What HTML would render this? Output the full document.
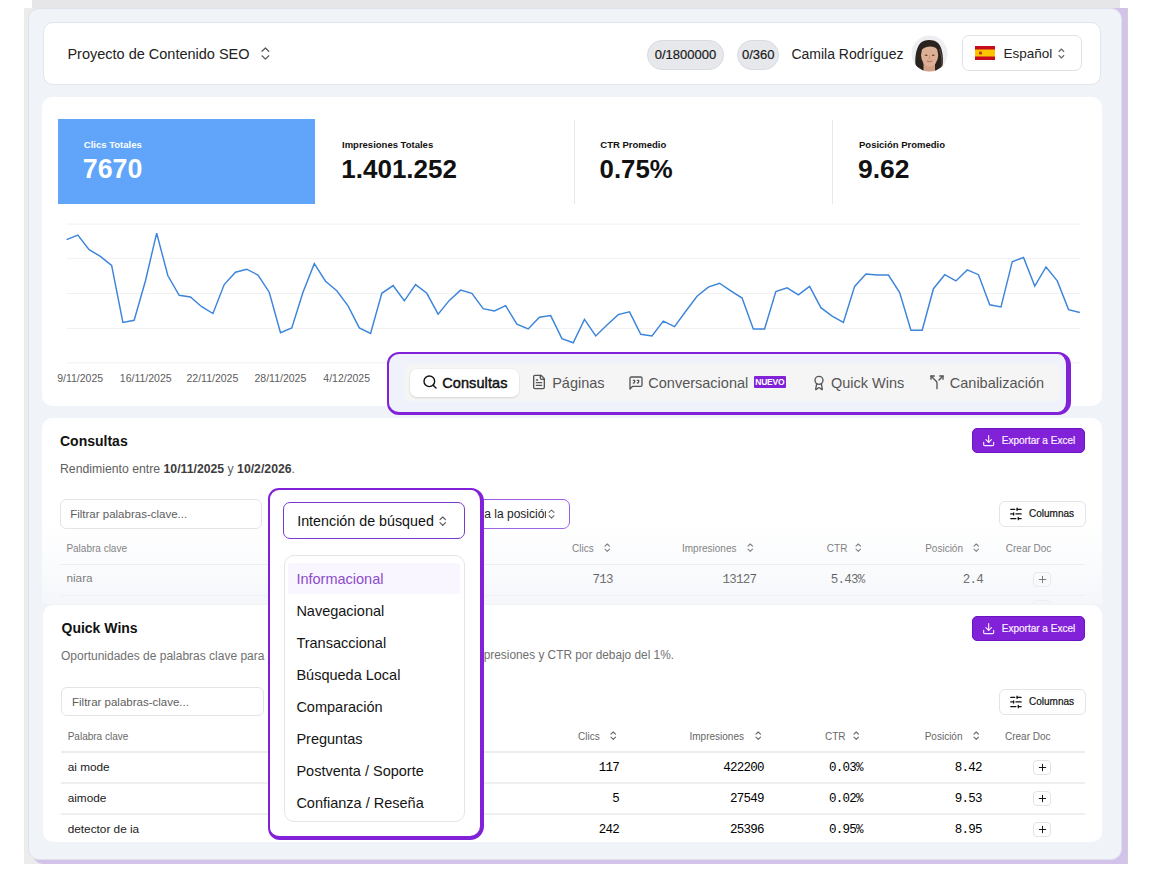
<!DOCTYPE html>
<html><head><meta charset="utf-8">
<style>
*{box-sizing:border-box;margin:0;padding:0}
html,body{width:1150px;height:873px;overflow:hidden;background:#fff;font-family:"Liberation Sans",sans-serif}
.r{position:absolute}
.t{position:absolute;white-space:nowrap}
b{font-weight:700}
</style></head><body>
<div class="r" style="left:32.00px;top:0.00px;width:1088.00px;height:8.00px;background:#e6e6e8"></div>
<div class="r" style="left:24.00px;top:8.00px;width:1104.00px;height:856.00px;background:linear-gradient(90deg,#ececec 0%,#e6e6e8 95%,#cfcfd3 100%)"></div>
<div class="r" style="left:32.00px;top:8.00px;width:1095.40px;height:856.00px;background:#d3c3eb;border-radius:11px 0 3px 12px"></div>
<div class="r" style="left:28.20px;top:8.00px;width:1093.80px;height:852.00px;background:#f0f3f8;border:1.6px solid #dfe2ec;border-radius:11px"></div>
<div class="r" style="left:43.00px;top:22.00px;width:1058.00px;height:62.50px;background:#fff;border:1.5px solid #e2e5eb;border-radius:10px"></div>
<div class="t" style="left:67.40px;top:46.73px;font-size:14.5px;line-height:14.5px;font-weight:400;color:#222;font-family:'Liberation Sans',sans-serif;">Proyecto de Contenido SEO</div>
<svg class="r" style="left:260.10px;top:46.40px;" width="10.8" height="15.1" viewBox="0 0 10.8 15.1" fill="none"><path d="M2.00 5.30 L5.40 2.00 L8.80 5.30 M2.00 9.80 L5.40 13.10 L8.80 9.80" stroke="#555" stroke-width="1.2" stroke-linecap="round" stroke-linejoin="round"/></svg>
<div class="r" style="left:647.00px;top:40.00px;width:77.00px;height:30.30px;background:#e6e8ec;border:1px solid #d8dbe1;border-radius:16px"></div>
<div class="t" style="left:685.50px;transform:translateX(-50%);top:48.20px;font-size:13px;line-height:13px;font-weight:400;color:#1a1a1a;font-family:'Liberation Sans',sans-serif;-webkit-text-stroke:0.2px #1a1a1a">0/1800000</div>
<div class="r" style="left:737.40px;top:40.00px;width:41.60px;height:30.30px;background:#e6e8ec;border:1px solid #d8dbe1;border-radius:16px"></div>
<div class="t" style="left:758.20px;transform:translateX(-50%);top:48.20px;font-size:13px;line-height:13px;font-weight:400;color:#1a1a1a;font-family:'Liberation Sans',sans-serif;-webkit-text-stroke:0.2px #1a1a1a">0/360</div>
<div class="t" style="left:791.40px;top:46.65px;font-size:14px;line-height:14px;font-weight:400;color:#222;font-family:'Liberation Sans',sans-serif;">Camila Rodríguez</div>
<svg class="r" style="left:910.50px;top:35.00px;" width="37" height="37" viewBox="0 0 37 37" fill="none"><circle cx="18.5" cy="18.5" r="18" fill="#eeeef2"/><clipPath id="avc"><circle cx="18.5" cy="18.5" r="18"/></clipPath><filter id="avb"><feGaussianBlur stdDeviation="0.45"/></filter><g clip-path="url(#avc)" filter="url(#avb)"><path d="M5.5 34 C3 27 4.5 13 9.5 8 C13.5 4 23.5 4 27.5 8.5 C32 13.5 33 26 31 34 L26 36 L11 36 Z" fill="#2a211f"/><path d="M28.5 14 C31 20 31.5 28 30.5 33" stroke="#6a5a55" stroke-width="0.8" fill="none"/><rect x="12.5" y="27" width="11.5" height="12" fill="#d2a085"/><ellipse cx="18.6" cy="20" rx="8.6" ry="11.6" fill="#ddb096"/><path d="M9.8 15.5 C10.2 9 14.5 7 18.8 7 C23.5 7 27 9.5 27.4 15.5 C24.5 10.5 15 10 9.8 15.5 Z" fill="#2a211f"/><ellipse cx="15.2" cy="20.2" rx="1.5" ry="0.8" fill="#6b4536"/><ellipse cx="22.2" cy="20.2" rx="1.5" ry="0.8" fill="#6b4536"/><path d="M18.6 20.5 L18 24 L19.3 24" stroke="#c48f74" stroke-width="0.7" fill="none"/><path d="M15.8 26 Q18.6 27.6 21.4 26" stroke="#b0705e" stroke-width="1" fill="none"/></g></svg>
<div class="r" style="left:962.40px;top:35.20px;width:120.00px;height:35.40px;background:#fff;border:1px solid #dfe2e7;border-radius:7px"></div>
<svg class="r" style="left:975.00px;top:46.00px;" width="20" height="14" viewBox="0 0 20 14" fill="none"><rect x="0" y="0" width="20" height="14" fill="#c60b1e"/><rect x="0" y="3.5" width="20" height="7" fill="#ffc400"/><rect x="4" y="5.5" width="3" height="3" rx="1" fill="#ad1519" opacity="0.8"/></svg>
<div class="t" style="left:1003.50px;top:46.57px;font-size:13.5px;line-height:13.5px;font-weight:400;color:#222;font-family:'Liberation Sans',sans-serif;">Español</div>
<svg class="r" style="left:1057.30px;top:46.50px;" width="8.8" height="13" viewBox="0 0 8.8 13" fill="none"><path d="M2.00 4.50 L4.40 2.00 L6.80 4.50 M2.00 8.50 L4.40 11.00 L6.80 8.50" stroke="#666" stroke-width="1.1" stroke-linecap="round" stroke-linejoin="round"/></svg>
<div class="r" style="left:42.00px;top:97.00px;width:1060.00px;height:309.00px;background:#fff;border-radius:10px"></div>
<div class="r" style="left:57.50px;top:119.00px;width:257.50px;height:85.00px;background:#60a5fa"></div>
<div class="t" style="left:83.80px;top:140.46px;font-size:9.5px;line-height:9.5px;font-weight:700;color:#fff;font-family:'Liberation Sans',sans-serif;">Clics Totales</div>
<div class="t" style="left:82.80px;top:155.81px;font-size:26.8px;line-height:26.8px;font-weight:700;color:#fff;font-family:'Liberation Sans',sans-serif;">7670</div>
<div class="t" style="left:342.00px;top:140.46px;font-size:9.5px;line-height:9.5px;font-weight:700;color:#111;font-family:'Liberation Sans',sans-serif;">Impresiones Totales</div>
<div class="t" style="left:341.30px;top:156.49px;font-size:26px;line-height:26px;font-weight:700;color:#111;font-family:'Liberation Sans',sans-serif;">1.401.252</div>
<div class="r" style="left:573.50px;top:120.00px;width:1.00px;height:84.00px;background:#e8e8ea"></div>
<div class="t" style="left:600.30px;top:140.46px;font-size:9.5px;line-height:9.5px;font-weight:700;color:#111;font-family:'Liberation Sans',sans-serif;">CTR Promedio</div>
<div class="t" style="left:599.60px;top:156.66px;font-size:25.8px;line-height:25.8px;font-weight:700;color:#111;font-family:'Liberation Sans',sans-serif;">0.75%</div>
<div class="r" style="left:831.50px;top:120.00px;width:1.00px;height:84.00px;background:#e8e8ea"></div>
<div class="t" style="left:859.00px;top:140.46px;font-size:9.5px;line-height:9.5px;font-weight:700;color:#111;font-family:'Liberation Sans',sans-serif;">Posición Promedio</div>
<div class="t" style="left:858.00px;top:156.07px;font-size:26.5px;line-height:26.5px;font-weight:700;color:#111;font-family:'Liberation Sans',sans-serif;">9.62</div>
<svg class="r" style="left:0.00px;top:0.00px;" width="1150" height="873" viewBox="0 0 1150 873" fill="none"><line x1="66.6" y1="224.1" x2="1080" y2="224.1" stroke="#f1f1f2" stroke-width="1"/><line x1="66.6" y1="258.6" x2="1080" y2="258.6" stroke="#f1f1f2" stroke-width="1"/><line x1="66.6" y1="293.5" x2="1080" y2="293.5" stroke="#f1f1f2" stroke-width="1"/><line x1="66.6" y1="328.4" x2="1080" y2="328.4" stroke="#f1f1f2" stroke-width="1"/><line x1="66.6" y1="362.9" x2="1080" y2="362.9" stroke="#f1f1f2" stroke-width="1"/><polyline points="66.60,239.70 77.86,235.10 89.12,249.60 100.37,256.40 111.63,265.40 122.89,322.40 134.15,320.30 145.40,281.00 156.66,233.20 167.92,275.80 179.18,295.30 190.44,297.00 201.69,306.70 212.95,313.50 224.21,284.60 235.47,272.20 246.72,269.20 257.98,275.00 269.24,292.20 280.50,332.70 291.76,327.90 303.01,292.20 314.27,263.70 325.53,281.20 336.79,290.80 348.04,305.90 359.30,327.90 370.56,333.40 381.82,293.30 393.08,285.60 404.33,300.80 415.59,284.60 426.85,293.30 438.11,314.20 449.36,300.40 460.62,290.10 471.88,293.30 483.14,308.70 494.40,311.00 505.65,305.70 516.91,324.10 528.17,329.00 539.43,317.20 550.68,315.60 561.94,338.60 573.20,342.80 584.46,319.40 595.72,335.90 606.97,325.00 618.23,314.60 629.49,311.90 640.75,334.30 652.00,335.90 663.26,321.10 674.52,326.60 685.78,311.30 697.04,296.30 708.29,287.10 719.55,283.20 730.81,290.80 742.07,298.10 753.32,329.00 764.58,329.00 775.84,291.50 787.10,287.80 798.36,294.90 809.61,286.40 820.87,307.70 832.13,316.20 843.39,322.40 854.64,286.40 865.90,274.00 877.16,275.00 888.42,275.00 899.68,292.60 910.93,330.30 922.19,330.30 933.45,288.70 944.71,274.70 955.96,280.90 967.22,269.90 978.48,274.70 989.74,304.80 1001.00,307.00 1012.25,261.70 1023.51,257.50 1034.77,286.00 1046.03,267.00 1057.28,280.90 1068.54,309.60 1079.80,312.50" stroke="#3d85da" stroke-width="1.45" stroke-linejoin="miter" fill="none"/></svg>
<div class="t" style="left:57.20px;top:373.11px;font-size:10.5px;line-height:10.5px;font-weight:400;color:#5c5c5c;font-family:'Liberation Sans',sans-serif;">9/11/2025</div>
<div class="t" style="left:119.80px;top:373.11px;font-size:10.5px;line-height:10.5px;font-weight:400;color:#5c5c5c;font-family:'Liberation Sans',sans-serif;">16/11/2025</div>
<div class="t" style="left:186.50px;top:373.11px;font-size:10.5px;line-height:10.5px;font-weight:400;color:#5c5c5c;font-family:'Liberation Sans',sans-serif;">22/11/2025</div>
<div class="t" style="left:254.50px;top:373.11px;font-size:10.5px;line-height:10.5px;font-weight:400;color:#5c5c5c;font-family:'Liberation Sans',sans-serif;">28/11/2025</div>
<div class="t" style="left:323.30px;top:373.11px;font-size:10.5px;line-height:10.5px;font-weight:400;color:#5c5c5c;font-family:'Liberation Sans',sans-serif;">4/12/2025</div>
<div class="r" style="left:42.00px;top:418.00px;width:1060.00px;height:222.00px;background:#fff;border-radius:10px"></div>
<div class="t" style="left:60.00px;top:434.45px;font-size:14px;line-height:14px;font-weight:700;color:#111;font-family:'Liberation Sans',sans-serif;">Consultas</div>
<div class="t" style="left:60.00px;top:462.93px;font-size:12.25px;line-height:12.25px;font-weight:400;color:#606060;font-family:'Liberation Sans',sans-serif;">Rendimiento entre <b style="color:#3d3d3d">10/11/2025</b> y <b style="color:#3d3d3d">10/2/2026</b>.</div>
<div class="r" style="left:972.30px;top:427.90px;width:113.00px;height:25.50px;background:#8222d8;border:1px solid #6c14c2;border-radius:5px"></div>
<svg class="r" style="left:981.80px;top:433.90px;" width="13.3" height="13.3" viewBox="0 0 24 24" fill="none" stroke="#fbe9ff" stroke-width="2.1" stroke-linecap="round" stroke-linejoin="round"><path d="M21 15v4a2 2 0 0 1-2 2H5a2 2 0 0 1-2-2v-4"/><polyline points="7 10 12 15 17 10"/><line x1="12" x2="12" y1="15" y2="3"/></svg>
<div class="t" style="left:1001.80px;top:435.83px;font-size:10px;line-height:10px;font-weight:400;color:#fbeeff;font-family:'Liberation Sans',sans-serif;-webkit-text-stroke:0.2px #fbeeff">Exportar a Excel</div>
<div class="r" style="left:59.60px;top:499.00px;width:202.90px;height:29.50px;background:#fff;border:1px solid #e2e4e8;border-radius:6px"></div>
<div class="t" style="left:70.20px;top:508.87px;font-size:11.5px;line-height:11.5px;font-weight:400;color:#5e5e5e;font-family:'Liberation Sans',sans-serif;">Filtrar palabras-clave...</div>
<div class="r" style="left:440.00px;top:498.50px;width:129.80px;height:30.40px;background:#fff;border:1.5px solid #9b5de5;border-radius:7px"></div>
<div class="r" style="left:470px;top:504px;width:75.5px;height:20px;overflow:hidden"><div class="t" style="left:14.30px;top:3.84px;font-size:12px;line-height:12px;font-weight:400;color:#222;font-family:'Liberation Sans',sans-serif;">a la posición</div>
</div><svg class="r" style="left:547.00px;top:507.80px;" width="9" height="12.2" viewBox="0 0 9 12.2" fill="none"><path d="M2.00 4.50 L4.50 2.00 L7.00 4.50 M2.00 7.70 L4.50 10.20 L7.00 7.70" stroke="#666" stroke-width="1.05" stroke-linecap="round" stroke-linejoin="round"/></svg>
<div class="r" style="left:999.00px;top:501.00px;width:86.50px;height:26.00px;background:#fff;border:1px solid #e2e4e8;border-radius:6px"></div>
<svg class="r" style="left:1009.20px;top:507.00px;" width="13.9" height="13.9" viewBox="0 0 24 24" fill="none" stroke="#111" stroke-width="2.1" stroke-linecap="round" stroke-linejoin="round"><line x1="21" x2="14" y1="4" y2="4"/><line x1="10" x2="3" y1="4" y2="4"/><line x1="21" x2="12" y1="12" y2="12"/><line x1="8" x2="3" y1="12" y2="12"/><line x1="21" x2="16" y1="20" y2="20"/><line x1="12" x2="3" y1="20" y2="20"/><line x1="14" x2="14" y1="2" y2="6"/><line x1="8" x2="8" y1="10" y2="14"/><line x1="16" x2="16" y1="18" y2="22"/></svg>
<div class="t" style="left:1029.00px;top:509.04px;font-size:10px;line-height:10px;font-weight:400;color:#111;font-family:'Liberation Sans',sans-serif;-webkit-text-stroke:0.2px #111">Columnas</div>
<div class="t" style="left:66.40px;top:544.03px;font-size:10px;line-height:10px;font-weight:400;color:#676767;font-family:'Liberation Sans',sans-serif;">Palabra clave</div>
<div class="t" style="left:572.00px;top:544.03px;font-size:10px;line-height:10px;font-weight:400;color:#676767;font-family:'Liberation Sans',sans-serif;">Clics</div>
<svg class="r" style="left:603.15px;top:542.30px;" width="8.5" height="11.3" viewBox="0 0 8.5 11.3" fill="none"><path d="M2.00 4.20 L4.25 2.00 L6.50 4.20 M2.00 7.10 L4.25 9.30 L6.50 7.10" stroke="#666" stroke-width="1.1" stroke-linecap="round" stroke-linejoin="round"/></svg>
<div class="t" style="left:682.00px;top:544.03px;font-size:10px;line-height:10px;font-weight:400;color:#676767;font-family:'Liberation Sans',sans-serif;">Impresiones</div>
<svg class="r" style="left:746.05px;top:542.30px;" width="8.5" height="11.3" viewBox="0 0 8.5 11.3" fill="none"><path d="M2.00 4.20 L4.25 2.00 L6.50 4.20 M2.00 7.10 L4.25 9.30 L6.50 7.10" stroke="#666" stroke-width="1.1" stroke-linecap="round" stroke-linejoin="round"/></svg>
<div class="t" style="left:826.80px;top:544.03px;font-size:10px;line-height:10px;font-weight:400;color:#676767;font-family:'Liberation Sans',sans-serif;">CTR</div>
<svg class="r" style="left:854.35px;top:542.30px;" width="8.5" height="11.3" viewBox="0 0 8.5 11.3" fill="none"><path d="M2.00 4.20 L4.25 2.00 L6.50 4.20 M2.00 7.10 L4.25 9.30 L6.50 7.10" stroke="#666" stroke-width="1.1" stroke-linecap="round" stroke-linejoin="round"/></svg>
<div class="t" style="left:925.20px;top:544.03px;font-size:10px;line-height:10px;font-weight:400;color:#676767;font-family:'Liberation Sans',sans-serif;">Posición</div>
<svg class="r" style="left:971.95px;top:542.30px;" width="8.5" height="11.3" viewBox="0 0 8.5 11.3" fill="none"><path d="M2.00 4.20 L4.25 2.00 L6.50 4.20 M2.00 7.10 L4.25 9.30 L6.50 7.10" stroke="#666" stroke-width="1.1" stroke-linecap="round" stroke-linejoin="round"/></svg>
<div class="t" style="left:1005.80px;top:544.03px;font-size:10px;line-height:10px;font-weight:400;color:#676767;font-family:'Liberation Sans',sans-serif;">Crear Doc</div>
<div class="r" style="left:59.60px;top:563.60px;width:1025.90px;height:1.30px;background:#ededee"></div>
<div class="t" style="left:66.40px;top:573.31px;font-size:11.8px;line-height:11.8px;font-weight:400;color:#1a1a1a;font-family:'Liberation Sans',sans-serif;">niara</div>
<div class="t" style="right:537.20px;top:573.92px;font-size:12.5px;line-height:12.5px;font-weight:400;color:#000;font-family:'Liberation Mono',sans-serif;letter-spacing:-0.75px">713</div>
<div class="t" style="right:393.70px;top:573.92px;font-size:12.5px;line-height:12.5px;font-weight:400;color:#000;font-family:'Liberation Mono',sans-serif;letter-spacing:-0.75px">13127</div>
<div class="t" style="left:830.80px;top:573.92px;font-size:12.5px;line-height:12.5px;font-weight:400;color:#000;font-family:'Liberation Mono',sans-serif;letter-spacing:-0.75px">5.43%</div>
<div class="t" style="right:166.90px;top:573.92px;font-size:12.5px;line-height:12.5px;font-weight:400;color:#000;font-family:'Liberation Mono',sans-serif;letter-spacing:-0.75px">2.4</div>
<div class="r" style="left:1033.20px;top:571.50px;width:18.00px;height:15.50px;background:#fff;border:1px solid #e3e3e6;border-radius:4px"></div>
<svg class="r" style="left:1036.60px;top:573.90px;" width="11" height="11" viewBox="0 0 24 24" fill="none" stroke="#111" stroke-width="2.1" stroke-linecap="round" stroke-linejoin="round"><path d="M5 12h14"/><path d="M12 5v14"/></svg>
<div class="r" style="left:59.60px;top:594.60px;width:1025.90px;height:1.20px;background:#ededee"></div>
<div class="r" style="left:1033.20px;top:600.00px;width:18.00px;height:15.50px;background:#fff;border:1px solid #e3e3e6;border-radius:4px"></div>
<svg class="r" style="left:1036.60px;top:602.40px;" width="11" height="11" viewBox="0 0 24 24" fill="none" stroke="#111" stroke-width="2.1" stroke-linecap="round" stroke-linejoin="round"><path d="M5 12h14"/><path d="M12 5v14"/></svg>
<div class="r" style="left:42.00px;top:520.00px;width:1060.00px;height:86.00px;background:linear-gradient(180deg,rgba(240,243,248,0) 0%,rgba(240,243,248,0.35) 60%,rgba(240,243,248,0.75) 100%)"></div>
<div class="r" style="left:42.00px;top:604.00px;width:1060.00px;height:36.00px;background:#f0f3f8"></div>
<div class="r" style="left:42.50px;top:605.00px;width:1059.50px;height:237.00px;background:#fff;border-radius:10px"></div>
<div class="t" style="left:61.50px;top:621.45px;font-size:14px;line-height:14px;font-weight:700;color:#111;font-family:'Liberation Sans',sans-serif;">Quick Wins</div>
<div class="r" style="left:972.30px;top:615.60px;width:113.00px;height:25.50px;background:#8222d8;border:1px solid #6c14c2;border-radius:5px"></div>
<svg class="r" style="left:981.80px;top:621.60px;" width="13.3" height="13.3" viewBox="0 0 24 24" fill="none" stroke="#fbe9ff" stroke-width="2.1" stroke-linecap="round" stroke-linejoin="round"><path d="M21 15v4a2 2 0 0 1-2 2H5a2 2 0 0 1-2-2v-4"/><polyline points="7 10 12 15 17 10"/><line x1="12" x2="12" y1="15" y2="3"/></svg>
<div class="t" style="left:1001.80px;top:623.53px;font-size:10px;line-height:10px;font-weight:400;color:#fbeeff;font-family:'Liberation Sans',sans-serif;-webkit-text-stroke:0.2px #fbeeff">Exportar a Excel</div>
<div class="t" style="left:61.00px;top:650.34px;font-size:12px;line-height:12px;font-weight:400;color:#707070;font-family:'Liberation Sans',sans-serif;">Oportunidades de palabras clave para</div>
<div class="t" style="right:476.00px;top:650.47px;font-size:11.85px;line-height:11.85px;font-weight:400;color:#707070;font-family:'Liberation Sans',sans-serif;">presiones y CTR por debajo del 1%.</div>
<div class="r" style="left:61.40px;top:687.40px;width:202.20px;height:28.60px;background:#fff;border:1px solid #e2e4e8;border-radius:6px"></div>
<div class="t" style="left:72.00px;top:697.27px;font-size:11.5px;line-height:11.5px;font-weight:400;color:#5e5e5e;font-family:'Liberation Sans',sans-serif;">Filtrar palabras-clave...</div>
<div class="r" style="left:999.00px;top:689.00px;width:86.50px;height:26.00px;background:#fff;border:1px solid #e2e4e8;border-radius:6px"></div>
<svg class="r" style="left:1009.20px;top:695.00px;" width="13.9" height="13.9" viewBox="0 0 24 24" fill="none" stroke="#111" stroke-width="2.1" stroke-linecap="round" stroke-linejoin="round"><line x1="21" x2="14" y1="4" y2="4"/><line x1="10" x2="3" y1="4" y2="4"/><line x1="21" x2="12" y1="12" y2="12"/><line x1="8" x2="3" y1="12" y2="12"/><line x1="21" x2="16" y1="20" y2="20"/><line x1="12" x2="3" y1="20" y2="20"/><line x1="14" x2="14" y1="2" y2="6"/><line x1="8" x2="8" y1="10" y2="14"/><line x1="16" x2="16" y1="18" y2="22"/></svg>
<div class="t" style="left:1029.00px;top:697.03px;font-size:10px;line-height:10px;font-weight:400;color:#111;font-family:'Liberation Sans',sans-serif;-webkit-text-stroke:0.2px #111">Columnas</div>
<div class="t" style="left:67.70px;top:731.74px;font-size:10px;line-height:10px;font-weight:400;color:#676767;font-family:'Liberation Sans',sans-serif;">Palabra clave</div>
<div class="t" style="left:578.00px;top:731.74px;font-size:10px;line-height:10px;font-weight:400;color:#676767;font-family:'Liberation Sans',sans-serif;">Clics</div>
<svg class="r" style="left:609.15px;top:730.00px;" width="8.5" height="11.3" viewBox="0 0 8.5 11.3" fill="none"><path d="M2.00 4.20 L4.25 2.00 L6.50 4.20 M2.00 7.10 L4.25 9.30 L6.50 7.10" stroke="#666" stroke-width="1.1" stroke-linecap="round" stroke-linejoin="round"/></svg>
<div class="t" style="left:689.50px;top:731.74px;font-size:10px;line-height:10px;font-weight:400;color:#676767;font-family:'Liberation Sans',sans-serif;">Impresiones</div>
<svg class="r" style="left:754.05px;top:730.00px;" width="8.5" height="11.3" viewBox="0 0 8.5 11.3" fill="none"><path d="M2.00 4.20 L4.25 2.00 L6.50 4.20 M2.00 7.10 L4.25 9.30 L6.50 7.10" stroke="#666" stroke-width="1.1" stroke-linecap="round" stroke-linejoin="round"/></svg>
<div class="t" style="left:825.00px;top:731.74px;font-size:10px;line-height:10px;font-weight:400;color:#676767;font-family:'Liberation Sans',sans-serif;">CTR</div>
<svg class="r" style="left:852.25px;top:730.00px;" width="8.5" height="11.3" viewBox="0 0 8.5 11.3" fill="none"><path d="M2.00 4.20 L4.25 2.00 L6.50 4.20 M2.00 7.10 L4.25 9.30 L6.50 7.10" stroke="#666" stroke-width="1.1" stroke-linecap="round" stroke-linejoin="round"/></svg>
<div class="t" style="left:924.70px;top:731.74px;font-size:10px;line-height:10px;font-weight:400;color:#676767;font-family:'Liberation Sans',sans-serif;">Posición</div>
<svg class="r" style="left:971.55px;top:730.00px;" width="8.5" height="11.3" viewBox="0 0 8.5 11.3" fill="none"><path d="M2.00 4.20 L4.25 2.00 L6.50 4.20 M2.00 7.10 L4.25 9.30 L6.50 7.10" stroke="#666" stroke-width="1.1" stroke-linecap="round" stroke-linejoin="round"/></svg>
<div class="t" style="left:1005.00px;top:731.74px;font-size:10px;line-height:10px;font-weight:400;color:#676767;font-family:'Liberation Sans',sans-serif;">Crear Doc</div>
<div class="r" style="left:61.00px;top:751.40px;width:1024.00px;height:1.30px;background:#ededee"></div>
<div class="t" style="left:67.70px;top:761.61px;font-size:11.8px;line-height:11.8px;font-weight:400;color:#1a1a1a;font-family:'Liberation Sans',sans-serif;">ai mode</div>
<div class="t" style="right:531.00px;top:762.22px;font-size:12.5px;line-height:12.5px;font-weight:400;color:#000;font-family:'Liberation Mono',sans-serif;letter-spacing:-0.75px">117</div>
<div class="t" style="right:386.20px;top:762.22px;font-size:12.5px;line-height:12.5px;font-weight:400;color:#000;font-family:'Liberation Mono',sans-serif;letter-spacing:-0.75px">422200</div>
<div class="t" style="left:829.00px;top:762.22px;font-size:12.5px;line-height:12.5px;font-weight:400;color:#000;font-family:'Liberation Mono',sans-serif;letter-spacing:-0.75px">0.03%</div>
<div class="t" style="right:168.20px;top:762.22px;font-size:12.5px;line-height:12.5px;font-weight:400;color:#000;font-family:'Liberation Mono',sans-serif;letter-spacing:-0.75px">8.42</div>
<div class="r" style="left:1033.20px;top:759.60px;width:18.00px;height:15.50px;background:#fff;border:1px solid #e3e3e6;border-radius:4px"></div>
<svg class="r" style="left:1036.60px;top:762.00px;" width="11" height="11" viewBox="0 0 24 24" fill="none" stroke="#111" stroke-width="2.1" stroke-linecap="round" stroke-linejoin="round"><path d="M5 12h14"/><path d="M12 5v14"/></svg>
<div class="r" style="left:61.00px;top:782.40px;width:1024.00px;height:1.20px;background:#efeff0"></div>
<div class="t" style="left:67.70px;top:792.61px;font-size:11.8px;line-height:11.8px;font-weight:400;color:#1a1a1a;font-family:'Liberation Sans',sans-serif;">aimode</div>
<div class="t" style="right:531.00px;top:793.22px;font-size:12.5px;line-height:12.5px;font-weight:400;color:#000;font-family:'Liberation Mono',sans-serif;letter-spacing:-0.75px">5</div>
<div class="t" style="right:386.20px;top:793.22px;font-size:12.5px;line-height:12.5px;font-weight:400;color:#000;font-family:'Liberation Mono',sans-serif;letter-spacing:-0.75px">27549</div>
<div class="t" style="left:829.00px;top:793.22px;font-size:12.5px;line-height:12.5px;font-weight:400;color:#000;font-family:'Liberation Mono',sans-serif;letter-spacing:-0.75px">0.02%</div>
<div class="t" style="right:168.20px;top:793.22px;font-size:12.5px;line-height:12.5px;font-weight:400;color:#000;font-family:'Liberation Mono',sans-serif;letter-spacing:-0.75px">9.53</div>
<div class="r" style="left:1033.20px;top:790.60px;width:18.00px;height:15.50px;background:#fff;border:1px solid #e3e3e6;border-radius:4px"></div>
<svg class="r" style="left:1036.60px;top:793.00px;" width="11" height="11" viewBox="0 0 24 24" fill="none" stroke="#111" stroke-width="2.1" stroke-linecap="round" stroke-linejoin="round"><path d="M5 12h14"/><path d="M12 5v14"/></svg>
<div class="r" style="left:61.00px;top:813.40px;width:1024.00px;height:1.20px;background:#efeff0"></div>
<div class="t" style="left:67.70px;top:823.61px;font-size:11.8px;line-height:11.8px;font-weight:400;color:#1a1a1a;font-family:'Liberation Sans',sans-serif;">detector de ia</div>
<div class="t" style="right:531.00px;top:824.22px;font-size:12.5px;line-height:12.5px;font-weight:400;color:#000;font-family:'Liberation Mono',sans-serif;letter-spacing:-0.75px">242</div>
<div class="t" style="right:386.20px;top:824.22px;font-size:12.5px;line-height:12.5px;font-weight:400;color:#000;font-family:'Liberation Mono',sans-serif;letter-spacing:-0.75px">25396</div>
<div class="t" style="left:829.00px;top:824.22px;font-size:12.5px;line-height:12.5px;font-weight:400;color:#000;font-family:'Liberation Mono',sans-serif;letter-spacing:-0.75px">0.95%</div>
<div class="t" style="right:168.20px;top:824.22px;font-size:12.5px;line-height:12.5px;font-weight:400;color:#000;font-family:'Liberation Mono',sans-serif;letter-spacing:-0.75px">8.95</div>
<div class="r" style="left:1033.20px;top:821.60px;width:18.00px;height:15.50px;background:#fff;border:1px solid #e3e3e6;border-radius:4px"></div>
<svg class="r" style="left:1036.60px;top:824.00px;" width="11" height="11" viewBox="0 0 24 24" fill="none" stroke="#111" stroke-width="2.1" stroke-linecap="round" stroke-linejoin="round"><path d="M5 12h14"/><path d="M12 5v14"/></svg>
<div class="r" style="left:387.20px;top:352.20px;width:683.70px;height:63.20px;background:#eff2fa;border-style:solid;border-color:#8222d8;border-width:2.5px 5px 3.9px 2.3px;border-radius:12px 13px 13px 12px"></div>
<div class="r" style="left:403.50px;top:363.80px;width:656.50px;height:37.20px;background:#f5f5f5;border-radius:7px;filter:blur(1.2px)"></div>
<div class="r" style="left:409.70px;top:368.50px;width:109.60px;height:28.50px;background:#fff;border-radius:7px;box-shadow:0 1px 2px rgba(0,0,0,0.12),0 0 0 0.5px rgba(0,0,0,0.04)"></div>
<svg class="r" style="left:421.60px;top:374.30px;" width="16" height="16" viewBox="0 0 24 24" fill="none" stroke="#111" stroke-width="2.1" stroke-linecap="round" stroke-linejoin="round"><circle cx="11" cy="11" r="8"/><path d="m21 21-4.3-4.3"/></svg>
<div class="t" style="left:442.20px;top:375.53px;font-size:14.5px;line-height:14.5px;font-weight:400;color:#111;font-family:'Liberation Sans',sans-serif;-webkit-text-stroke:0.45px #111;letter-spacing:0.1px">Consultas</div>
<svg class="r" style="left:531.40px;top:374.30px;" width="16" height="16" viewBox="0 0 24 24" fill="none" stroke="#555" stroke-width="2" stroke-linecap="round" stroke-linejoin="round"><path d="M15 2H6a2 2 0 0 0-2 2v16a2 2 0 0 0 2 2h12a2 2 0 0 0 2-2V7Z"/><path d="M14 2v4a2 2 0 0 0 2 2h4"/><path d="M10 9H8"/><path d="M16 13H8"/><path d="M16 17H8"/></svg>
<div class="t" style="left:552.20px;top:375.53px;font-size:14.5px;line-height:14.5px;font-weight:400;color:#555;font-family:'Liberation Sans',sans-serif;">Páginas</div>
<svg class="r" style="left:628.00px;top:374.60px;" width="16" height="16" viewBox="0 0 24 24" fill="none" stroke="#555" stroke-width="2" stroke-linecap="round" stroke-linejoin="round"><path d="M21 15a2 2 0 0 1-2 2H7l-4 4V5a2 2 0 0 1 2-2h14a2 2 0 0 1 2 2z"/><path d="M8 12a2 2 0 0 0 2-2V8H8"/><path d="M14 12a2 2 0 0 0 2-2V8h-2"/></svg>
<div class="t" style="left:648.30px;top:375.53px;font-size:14.5px;line-height:14.5px;font-weight:400;color:#555;font-family:'Liberation Sans',sans-serif;">Conversacional</div>
<div class="r" style="left:753.50px;top:376.30px;width:32.30px;height:12.00px;background:#8222d8;border-radius:1px"></div>
<div class="t" style="left:769.80px;transform:translateX(-50%);top:377.90px;font-size:8.5px;line-height:8.5px;font-weight:700;color:#fff;font-family:'Liberation Sans',sans-serif;letter-spacing:-0.25px">NUEVO</div>
<svg class="r" style="left:810.90px;top:374.50px;" width="16" height="16" viewBox="0 0 24 24" fill="none" stroke="#555" stroke-width="2" stroke-linecap="round" stroke-linejoin="round"><path d="m15.477 12.89 1.515 8.526a.5.5 0 0 1-.81.47l-3.58-2.687a1 1 0 0 0-1.197 0l-3.586 2.686a.5.5 0 0 1-.81-.469l1.514-8.526"/><circle cx="12" cy="8" r="6"/></svg>
<div class="t" style="left:831.00px;top:375.53px;font-size:14.5px;line-height:14.5px;font-weight:400;color:#555;font-family:'Liberation Sans',sans-serif;">Quick Wins</div>
<svg class="r" style="left:929.40px;top:374.40px;" width="16" height="16" viewBox="0 0 24 24" fill="none" stroke="#555" stroke-width="2" stroke-linecap="round" stroke-linejoin="round"><path d="M16 3h5v5"/><path d="M8 3H3v5"/><path d="M12 22v-8.3a4 4 0 0 0-1.172-2.872L3 3"/><path d="m15 9 6-6"/></svg>
<div class="t" style="left:949.80px;top:375.53px;font-size:14.5px;line-height:14.5px;font-weight:400;color:#555;font-family:'Liberation Sans',sans-serif;">Canibalización</div>
<div class="r" style="left:268.10px;top:487.90px;width:215.90px;height:352.50px;background:#fff;border-style:solid;border-color:#8222d8;border-width:2.3px 4.9px 4.4px 2.5px;border-radius:11px 13px 14px 12px"></div>
<div class="r" style="left:282.80px;top:501.90px;width:182.00px;height:37.20px;background:#fff;border:1.6px solid #7a3ac8;border-radius:7px"></div>
<div class="t" style="left:297.20px;top:514.20px;font-size:14.3px;line-height:14.3px;font-weight:400;color:#111;font-family:'Liberation Sans',sans-serif;">Intención de búsqued</div>
<svg class="r" style="left:438.25px;top:514.90px;" width="9.5" height="12.3" viewBox="0 0 9.5 12.3" fill="none"><path d="M2.00 4.70 L4.75 2.00 L7.50 4.70 M2.00 7.60 L4.75 10.30 L7.50 7.60" stroke="#555" stroke-width="1.1" stroke-linecap="round" stroke-linejoin="round"/></svg>
<div class="r" style="left:284.40px;top:555.00px;width:180.60px;height:267.00px;background:#fff;border:1.8px solid #e3e5ea;border-radius:10px"></div>
<div class="r" style="left:288.00px;top:563.00px;width:172.00px;height:31.00px;background:#faf6ff;border-radius:3px"></div>
<div class="t" style="left:296.40px;top:571.93px;font-size:14.5px;line-height:14.5px;font-weight:400;color:#8b4cc9;font-family:'Liberation Sans',sans-serif;">Informacional</div>
<div class="t" style="left:296.40px;top:603.93px;font-size:14.5px;line-height:14.5px;font-weight:400;color:#151515;font-family:'Liberation Sans',sans-serif;">Navegacional</div>
<div class="t" style="left:296.40px;top:635.93px;font-size:14.5px;line-height:14.5px;font-weight:400;color:#151515;font-family:'Liberation Sans',sans-serif;">Transaccional</div>
<div class="t" style="left:296.40px;top:667.93px;font-size:14.5px;line-height:14.5px;font-weight:400;color:#151515;font-family:'Liberation Sans',sans-serif;">Búsqueda Local</div>
<div class="t" style="left:296.40px;top:699.93px;font-size:14.5px;line-height:14.5px;font-weight:400;color:#151515;font-family:'Liberation Sans',sans-serif;">Comparación</div>
<div class="t" style="left:296.40px;top:731.93px;font-size:14.5px;line-height:14.5px;font-weight:400;color:#151515;font-family:'Liberation Sans',sans-serif;">Preguntas</div>
<div class="t" style="left:296.40px;top:763.93px;font-size:14.5px;line-height:14.5px;font-weight:400;color:#151515;font-family:'Liberation Sans',sans-serif;">Postventa / Soporte</div>
<div class="t" style="left:296.40px;top:795.93px;font-size:14.5px;line-height:14.5px;font-weight:400;color:#151515;font-family:'Liberation Sans',sans-serif;">Confianza / Reseña</div>
</body></html>
